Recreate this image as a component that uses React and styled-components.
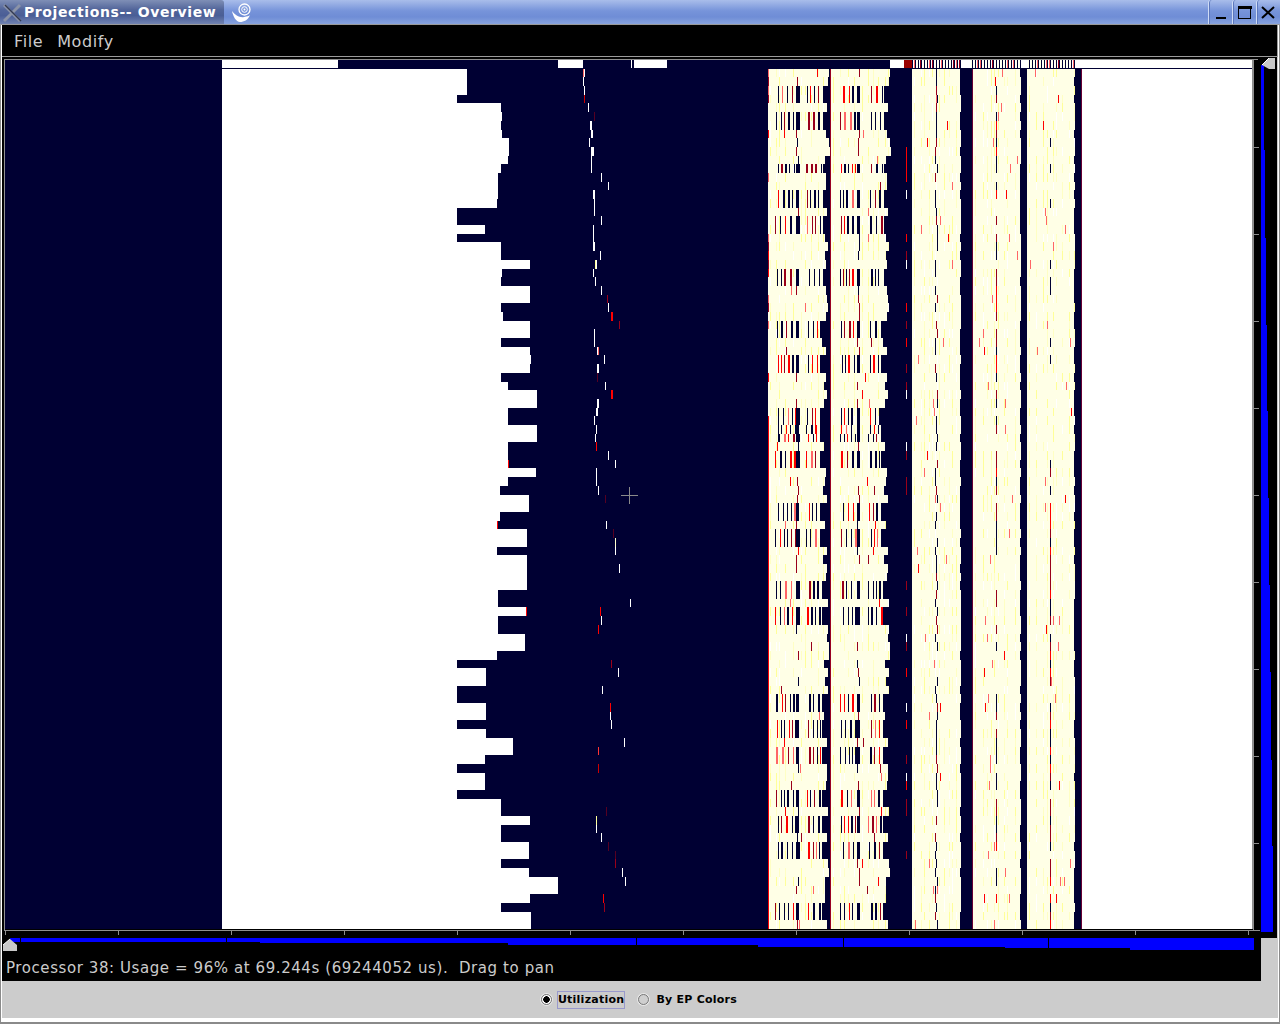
import React, { useMemo } from "react";
import styled, { createGlobalStyle } from "styled-components";

const Global = createGlobalStyle`
  html, body { margin: 0; padding: 0; background: #fff; }
  #root { width: 1280px; height: 1024px; overflow: hidden; }
`;

const NAVY = "#000033";
const CREAM = "#ffffe6";
const UI_FONT = '"DejaVu Sans", "Liberation Sans", sans-serif';

const Window = styled.div`
  width: 1280px;
  height: 1024px;
  box-sizing: border-box;
  display: flex;
  flex-direction: column;
  background: #fff;
  border-bottom: 2px solid #8a8a8a;
  box-shadow: inset 1px 0 0 #8a8a8a, inset -1px 0 0 #8a8a8a;
  font-family: ${UI_FONT};
`;
const TitleBar = styled.div`
  height: 24px;
  flex: none;
  display: flex;
  background: linear-gradient(#a9bdea 0, #7794da 45%, #6f8dd6 70%, #86a2de 100%);
  border-bottom: 1px solid #9a9a9a;
`;
const TitleLeft = styled.div`
  width: 224px;
  display: flex;
  align-items: center;
  background: linear-gradient(#7f8fb6 0, #52659a 40%, #4a5e96 65%, #7183b2 100%);
  border-top-right-radius: 3px;
`;
const CloseGlyph = styled.svg`
  width: 20px;
  height: 24px;
  margin-left: 3px;
  flex: none;
`;
const TitleText = styled.span`
  color: #fff;
  font-size: 14px;
  font-weight: 700;
  letter-spacing: 0.6px;
  margin-left: 1px;
  white-space: nowrap;
`;
const Swirl = styled.svg`
  width: 24px;
  height: 24px;
  margin-left: 3px;
  flex: none;
`;
const TitleSpacer = styled.div`
  flex: 1;
`;
const WinButton = styled.div`
  width: 24px;
  height: 24px;
  box-sizing: border-box;
  flex: none;
  border-left: 1px solid #cfdcf6;
  box-shadow: inset 1px 0 0 #5d78bd;
  border-top-left-radius: 3px;
  svg { display: block; }
`;
const MenuBar = styled.div`
  height: 32px;
  flex: none;
  box-sizing: border-box;
  margin: 0 2px;
  padding: 1px 0 0 12px;
  display: flex;
  align-items: center;
  gap: 14px;
  background: #000;
  border-bottom: 1px solid #9a9a9a;
  border-right: 1px solid #9a9a9a;
  color: #cccccc;
  font-size: 16px;
  letter-spacing: 0.6px;
`;
const MenuItem = styled.span``;
const ContentPane = styled.div`
  flex: 1;
  margin: 0 2px;
  display: flex;
  flex-direction: column;
  background: #cccccc;
`;
const ChartRow = styled.div`
  height: 881px;
  flex: none;
  margin-right: 1px;
  display: flex;
  background: #000;
  padding-left: 2px;
  box-sizing: border-box;
`;
const ChartSvg = styled.svg`
  display: block;
  flex: none;
`;
const LowerPanel = styled.div`
  width: 1259px;
  height: 43px;
  flex: none;
  background: #000;
`;
const StatusText = styled.div`
  height: 25px;
  padding-left: 4px;
  line-height: 24px;
  color: #cccccc;
  font-size: 15px;
  letter-spacing: 0.58px;
  white-space: pre;
`;
const RadioBar = styled.div`
  height: 37px;
  flex: none;
  display: flex;
  align-items: center;
  justify-content: center;
  background: #cccccc;
  color: #000;
  font-size: 11px;
  font-weight: 700;
`;
const RadioItem = styled.label`
  display: flex;
  align-items: center;
  margin-left: ${(p) => p.$gap}px;
`;
const RadioDot = styled.span`
  width: 11px;
  height: 11px;
  box-sizing: border-box;
  border-radius: 50%;
  border: 1px solid #777;
  background: ${(p) => (p.$on ? "radial-gradient(circle, #000 0 3px, #fff 3.5px)" : "#cfcfcf")};
  box-shadow: 0 0 0 1px #e8e8e8;
  margin-right: 5px;
`;
const RadioLabel = styled.span`
  box-sizing: border-box;
  height: 18px;
  line-height: 16px;
  padding: 0 ${(p) => (p.$focus ? 0 : 1)}px;
  border: 1px solid ${(p) => (p.$focus ? "#9999cc" : "transparent")};
  letter-spacing: 0.25px;
`;
const WhiteGap = styled.div`
  height: 4px;
  flex: none;
`;

function rng(seed) {
  let a = seed >>> 0;
  return () => {
    a = (a + 0x6d2b79f5) >>> 0;
    let t = a;
    t = Math.imul(t ^ (t >>> 15), t | 1);
    t ^= t + Math.imul(t ^ (t >>> 7), t | 61);
    return ((t ^ (t >>> 14)) >>> 0) / 4294967296;
  };
}

// Right edge of the big white block, one entry per row from row 1.
const EDGE = [467,467,467,457,501,502,501,502,509,509,508,501,498,498,498,497,457,457,485,457,
  501,501,530,502,501,530,530,501,503,530,530,501,530,531,530,501,508,537,537,508,508,537,537,
  508,508,508,536,508,500,529,529,500,497,527,527,497,527,527,527,527,498,498,527,498,498,525,
  525,497,457,486,486,457,457,486,486,457,486,513,513,485,457,485,485,457,501,501,530,501,501,
  529,529,501,529,558,558,530,501,531,531];

// Isolated marks of the sparse column: [row, x, width, colour]
const W = "#ffffff", R = "#ff0000", D = "#99001a", K = "#550022", Y = "#ffff99", P = "#ff6666";
const SPARKS = [
  [1,583,1,P],[1,584,1,W],[2,583,1,W],[3,584,1,W],[4,584,1,"#cc0000"],[5,588,1,W],[6,594,1,K],[7,590,2,W],[8,591,2,W],
  [9,589,1,W],[10,591,3,W],[11,591,1,W],[12,591,1,W],[13,601,1,W],[14,608,1,W],[15,593,2,W],[16,594,1,W],[17,594,1,W],
  [18,601,1,W],[19,593,1,W],[20,593,1,W],[21,593,2,W],[22,600,1,W],[23,595,1,Y],[23,596,1,W],[24,593,1,W],[25,595,1,W],
  [26,601,1,W],[27,607,1,D],[28,608,1,W],[29,611,2,R],[30,619,1,D],[31,594,1,W],[32,594,1,W],[33,597,1,W],[33,598,1,P],
  [34,604,1,W],[35,597,2,W],[36,597,1,K],[37,605,1,W],[38,611,2,R],[39,597,2,W],[40,596,2,W],[41,594,1,W],[42,596,1,W],
  [43,595,1,W],[44,596,1,R],[45,608,1,W],[46,615,1,W],[46,508,1,R],[47,596,1,W],[48,596,1,W],[49,598,1,W],[50,605,1,K],
  [53,606,1,W],[53,497,1,R],[54,613,1,K],[55,615,1,"#ffffcc"],[56,615,1,W],[58,619,1,W],[62,630,1,W],[63,600,1,R],[63,526,1,R],
  [64,601,1,W],[65,598,1,R],[69,611,1,D],[70,618,1,W],[72,602,1,W],[74,610,1,R],[75,610,1,W],[76,611,1,W],[78,624,1,W],
  [79,598,1,"#ff3333"],[81,598,1,"#cc0000"],[86,606,1,K],[87,596,1,Y],[88,596,1,W],[89,601,1,W],[90,608,1,K],[91,615,1,K],
  [92,615,1,D],[93,622,1,W],[94,625,1,W],[96,603,1,R],[97,604,1,D],
];

const STRIPED = new Set([3,4,6,7,12,15,16,18,19,24,25,30,31,34,35,40,41,42,43,45,46,51,52,54,55,60,61,63,64,73,74,76,77,79,80,84,85,87,88,90,91,97,98]);

const rowTop = (r) => Math.round(60 + 8.69 * r);

// Pale grain sits in roughly the same columns from one row to the next.
function grainColumns(a, b, seed) {
  const g = rng(seed);
  const cols = [];
  for (let x = a; x < b; x += 3 + Math.floor(g() * 6)) cols.push(x);
  return cols;
}

function buildHeatmap() {
  const layers = new Map();
  const paint = (x, y, w, h, color) => {
    layers.set(color, (layers.get(color) || "") + `M${x} ${y}h${w}v${h}h${-w}z`);
  };
  const over = new Map();
  const put = (color, x, y, w, h) => {
    over.set(color, (over.get(color) || "") + `M${x} ${y}h${w}v${h}h${-w}z`);
  };
  const r0 = rng(12345);
  const hot = () => {
    const v = r0();
    return v < 0.4 ? R : v < 0.75 ? D : P;
  };
  const grains = [
    grainColumns(770, 830, 1),
    grainColumns(833, 890, 2),
    grainColumns(914, 962, 3),
    grainColumns(975, 1022, 4),
    grainColumns(1029, 1076, 5),
  ];

  for (let r = 1; r < 100; r++) {
    const y = rowTop(r);
    const h = rowTop(r + 1) - y;
    const rr = rng(r * 977 + (r % 2 ? r - 1 : r) * 13);
    const pairSeed = STRIPED.has(r - 1) && STRIPED.has(r) ? r - 1 : r;
    const pr = rng(pairSeed * 7919);
    const striped = STRIPED.has(r);

    paint(222, y, EDGE[r - 1] - 222, h, W);
    paint(1082, y, 170, h, W);

    const baseEdge = r < 30 ? 823 : r < 60 ? 820 : 822;
    const k = striped ? 0 : 2 + Math.floor(rr() * 6);
    const right1 = baseEdge + k;
    const right2 = right1 + 61;
    const right3 = 960 + Math.floor(rr() * 2);
    const right4 = 1020 + Math.floor(rr() * 2);
    const right5 = 1074 + Math.floor(rr() * 2);

    paint(768, y, right1 - 768, h, CREAM);
    paint(831, y, right2 - 831, h, CREAM);
    paint(912, y, right3 - 912, h, CREAM);
    paint(973, y, right4 - 973, h, CREAM);
    paint(1027, y, right5 - 1027, h, CREAM);

    // pale vertical grain
    grains.forEach((cols, i) => {
      const limit = [right1, right2, right3, right4, right5][i];
      cols.forEach((x) => {
        if (x >= limit || rr() < 0.45) return;
        const v = rr();
        put(v < 0.35 ? "#ffff99" : v < 0.7 ? "#ffffc4" : "#ffffff", x, y, 1, h);
      });
    });

    // frame lines between the bands
    put("#990022", 830, y, 1, h);
    put("#660033", 972, y, 1, h);
    put("#660033", 1081, y, 1, h);

    // left edge of band 1
    if (r > 40 || rr() < 0.45) put(r > 40 ? R : hot(), 768, y, 1, h);

    // striped rows
    if (striped) {
      [[775, 796, 0], [806, right1 - 1, 0], [840, 856, 1], [868, right2 - 1, 1]].forEach(([a, b]) => {
        let x = a + Math.floor(pr() * 4);
        while (x < b) {
          const v = pr();
          const w = pr() < 0.3 ? 2 : 1;
          const c = v < 0.55 ? NAVY : v < 0.75 ? R : v < 0.92 ? D : P;
          put(c, x, y, w, h);
          x += w + 2 + Math.floor(pr() * 3);
        }
      });
      put(NAVY, 796, y, 3 + Math.floor(pr() * 2), h);
      put(NAVY, 857, y, 3, h);
      put(pr() < 0.4 ? R : NAVY, 858, y, 1, h);
    } else {
      if (rr() < 0.55) put(rr() < 0.5 ? NAVY : D, 796 + Math.floor(rr() * 3), y, 1, h);
      if (rr() < 0.55) put(rr() < 0.5 ? NAVY : D, 857 + Math.floor(rr() * 3), y, 1, h);
      if (rr() < 0.35) put(hot(), 776 + Math.floor(rr() * 45), y, 1, h);
      if (rr() < 0.35) put(hot(), 862 + Math.floor(rr() * 22), y, 1, h);
    }

    // middle line of band 3, 4, 5
    const m3 = rr();
    put(m3 < 0.6 ? NAVY : m3 < 0.82 ? D : "#ffffff", 935 + Math.floor(rr() * 3), y, 1, h);
    const m4 = rr();
    if (m4 < 0.7) put(m4 < 0.25 ? NAVY : m4 < 0.5 ? D : R, 996, y, 1, h);
    const m5 = rr();
    if (r >= 45 ? m5 < 0.75 : m5 < 0.12) put(m5 < 0.25 ? NAVY : m5 < 0.5 ? D : R, 1050, y, 1, h);

    // pink and red flecks
    [[914, 958, 0.25], [976, 1018, 0.3], [1030, 1073, 0.25]].forEach(([a, b, p]) => {
      if (rr() < p) put(rr() < 0.7 ? P : R, a + Math.floor(rr() * (b - a)), y, 1, h);
      if (rr() < p / 3) put(P, a + Math.floor(rr() * (b - a)), y, 1, h);
    });

    // sparse column just before band 3
    const s = rr();
    if (s < 0.4) put(s < 0.12 ? W : s < 0.25 ? R : D, 906, y, 1, h);
  }

  SPARKS.forEach(([r, x, w, c]) => {
    put(c, x, rowTop(r), w, rowTop(r + 1) - rowTop(r));
  });

  // row 0
  const y0 = 60;
  const h0 = 8;
  paint(222, y0, 116, h0, W);
  paint(558, y0, 25, h0, W);
  paint(631, y0, 1, h0, W);
  paint(634, y0, 33, h0, W);
  paint(890, y0, 14, h0, W);
  paint(904, y0, 8, h0, "#990000");
  paint(962, y0, 9, h0, W);
  paint(1022, y0, 5, h0, W);
  paint(1075, y0, 177, h0, W);
  [[912, 962], [971, 1022], [1027, 1075]].forEach(([a, b]) => {
    for (let x = a; x < b; x += 1) {
      const v = r0();
      put(x % 3 === 0 ? NAVY : x % 3 === 1 ? W : v < 0.2 ? P : v < 0.4 ? D : CREAM, x, y0, 1, h0);
    }
  });

  const list = [];
  layers.forEach((d, color) => list.push(["a" + color, color, d]));
  over.forEach((d, color) => list.push(["b" + color, color, d]));
  return list;
}

function HeatChart() {
  const layers = useMemo(buildHeatmap, []);
  const ticks = [];
  for (let i = 0; i < 12; i++) ticks.push(5 + i * 113);
  return (
    <ChartSvg width={1250} height={881} viewBox="4 57 1250 881" shapeRendering="crispEdges">
      <rect x="4" y="59" width="1250" height="872" fill="#8f8f8f" />
      <rect x="5" y="60" width="1247" height="869" fill={NAVY} />
      <rect x="5" y="929" width="1248" height="1" fill="#000" />
      {layers.map(([k, c, d]) => (
        <path key={k} d={d} fill={c} />
      ))}
      <path d="M621 495h17v1h-17zM629 487h1v17h-1z" fill="#8a8a8a" />
      {ticks.map((x) => (
        <rect key={x} x={x} y="931" width="1" height="4" fill="#8f8f8f" />
      ))}
    </ChartSvg>
  );
}

function VerticalScale() {
  const steps = [
    [65, 150, 3],
    [150, 238, 4],
    [238, 325, 5],
    [325, 411, 6],
    [411, 498, 7],
    [498, 585, 8],
    [585, 672, 9],
    [672, 760, 10],
    [760, 846, 11],
    [846, 932, 12],
  ];
  const ticks = [147, 234, 321, 408, 495, 582, 669, 756, 843];
  return (
    <ChartSvg width={23} height={881} viewBox="1254 57 23 881" shapeRendering="crispEdges">
      {ticks.map((y) => (
        <rect key={y} x="1254" y={y} width="5" height="1" fill="#8f8f8f" />
      ))}
      <rect x="1254" y="59" width="4" height="1" fill="#8f8f8f" />
      <rect x="1254" y="930" width="6" height="1" fill="#8f8f8f" />
      {steps.map(([a, b, w]) => (
        <rect key={a} x="1261" y={a} width={w} height={b - a} fill="#0000ff" />
      ))}
      <path d="M1262 65l7-7h6v11h-6z" fill="#c8c8c8" shapeRendering="auto" />
      <path d="M1262 65l7-7" stroke="#fff" strokeWidth="1" fill="none" shapeRendering="auto" />
    </ChartSvg>
  );
}

function HorizontalScale() {
  const steps = [
    [10, 135, 942],
    [135, 260, 942],
    [260, 385, 943],
    [385, 508, 943],
    [508, 636, 945],
    [636, 758, 945],
    [758, 880, 947],
    [880, 1005, 947],
    [1005, 1130, 948],
    [1130, 1254, 950],
  ];
  return (
    <ChartSvg width={1259} height={18} viewBox="2 938 1259 18" shapeRendering="crispEdges">
      {steps.map(([a, b, y]) => (
        <rect key={a} x={a} y="938" width={b - a} height={y - 938} fill="#0000ff" />
      ))}
      {[20, 226, 636, 843, 1048].map((x) => (
        <rect key={x} x={x} y="938" width="1" height="12" fill="#000" />
      ))}
      <path d="M3 945l7-6 7 6v6H3z" fill="#c8c8c8" shapeRendering="auto" />
      <path d="M3 945l7-6" stroke="#fff" fill="none" shapeRendering="auto" />
    </ChartSvg>
  );
}

export default function App() {
  return (
    <Window>
      <Global />
      <TitleBar>
        <TitleLeft>
          <CloseGlyph viewBox="0 0 20 24">
            <path d="M1 5l16 16M17 5L1 21" stroke="#8b93a8" strokeWidth="3" />
            <path d="M2 5l16 16" stroke="#333a52" strokeWidth="1.4" />
          </CloseGlyph>
          <TitleText>Projections-- Overview</TitleText>
        </TitleLeft>
        <Swirl viewBox="0 0 24 24" fill="none" stroke="#fff">
          <circle cx="17.5" cy="9.5" r="5.5" strokeWidth="1.3" />
          <circle cx="17.5" cy="9.5" r="2.8" strokeWidth="1" />
          <circle cx="17.5" cy="9.5" r="1" fill="#fff" stroke="none" />
          <path d="M5 11C8 15 13 18 17 17c3-.5 5-1 6-2-2 5-6 7-10 7-4 0-7-6-8-11z" fill="#fff" stroke="none" />
        </Swirl>
        <TitleSpacer />
        <WinButton>
          <svg width="23" height="24" fill="#000"><rect x="7" y="17" width="10" height="2" /></svg>
        </WinButton>
        <WinButton>
          <svg width="23" height="24" fill="none" stroke="#000" shapeRendering="crispEdges">
            <rect x="5.5" y="6.5" width="12" height="12" />
            <rect x="5" y="6" width="13" height="2" fill="#000" />
          </svg>
        </WinButton>
        <WinButton>
          <svg width="23" height="24" fill="none" stroke="#000" strokeWidth="2">
            <path d="M5 7l12 11M17 7L5 18" />
          </svg>
        </WinButton>
      </TitleBar>
      <MenuBar>
        <MenuItem>File</MenuItem>
        <MenuItem>Modify</MenuItem>
      </MenuBar>
      <ContentPane>
        <ChartRow>
          <HeatChart />
          <VerticalScale />
        </ChartRow>
        <LowerPanel>
          <HorizontalScale />
          <StatusText>{"Processor 38: Usage = 96% at 69.244s (69244052 us).  Drag to pan"}</StatusText>
        </LowerPanel>
        <RadioBar>
          <RadioItem $gap={0}>
            <RadioDot $on />
            <RadioLabel $focus>Utilization</RadioLabel>
          </RadioItem>
          <RadioItem $gap={13}>
            <RadioDot />
            <RadioLabel>By EP Colors</RadioLabel>
          </RadioItem>
        </RadioBar>
      </ContentPane>
      <WhiteGap />
    </Window>
  );
}
